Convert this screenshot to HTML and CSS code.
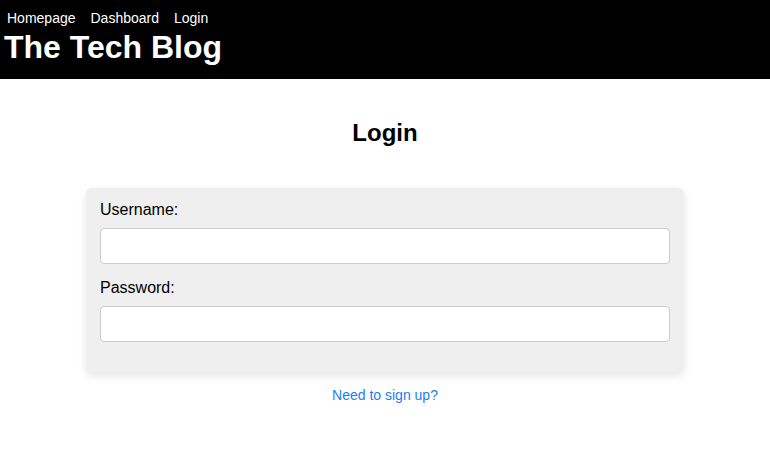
FILE: index.html
```html
<!DOCTYPE html>
<html>
<head>
<meta charset="utf-8">
<link rel="stylesheet" href="styles.css">
</head>
<body>
<header class="site-header">
  <nav class="nav">
    <a href="#">Homepage</a>
    <a href="#">Dashboard</a>
    <a href="#">Login</a>
  </nav>
  <h1 class="site-title">The Tech Blog</h1>
</header>
<main class="main">
  <h2 class="page-title">Login</h2>
  <form class="card">
    <label class="field-label" for="u">Username:</label>
    <input class="field-input" id="u" type="text">
    <label class="field-label" for="p">Password:</label>
    <input class="field-input" id="p" type="password">
  </form>
  <a class="signup" href="#">Need to sign up?</a>
</main>
</body>
</html>
```

FILE: styles.css
```css
* { box-sizing: border-box; }
body {
  margin: 0;
  font-family: "Liberation Sans", Arial, sans-serif;
  color: #000;
  background: #fff;
}
.site-header {
  background: #000;
  color: #fff;
  height: 79px;
  padding: 10px 4px 0;
}
.nav {
  display: flex;
  gap: 15px;
  padding-left: 3px;
  font-size: 14px;
  line-height: 16px;
}
.nav a { color: #fff; text-decoration: none; }
.site-title {
  margin: 3px 0 0;
  font-size: 32px;
  line-height: 37px;
  font-weight: bold;
}
.main {
  display: flex;
  flex-direction: column;
  align-items: center;
}
.page-title {
  margin: 40px 0 0;
  font-size: 24px;
  line-height: 28px;
  font-weight: bold;
}
.card {
  margin-top: 41px;
  width: 598px;
  background: #efefef;
  border-radius: 6px;
  box-shadow: 0 3px 8px rgba(0,0,0,0.1);
  padding: 13px 14px 31px;
  display: flex;
  flex-direction: column;
}
.field-label {
  font-size: 16px;
  line-height: 18px;
  margin-bottom: 9px;
}
.field-input {
  height: 36px;
  border: 1px solid #ccc;
  border-radius: 4px;
  background: #fff;
  margin-bottom: 15px;
  font-size: 16px;
}
.field-input:last-child { margin-bottom: 0; }
.signup {
  margin-top: 14px;
  font-size: 14px;
  color: #1e7cf5;
  text-decoration: none;
}
```
